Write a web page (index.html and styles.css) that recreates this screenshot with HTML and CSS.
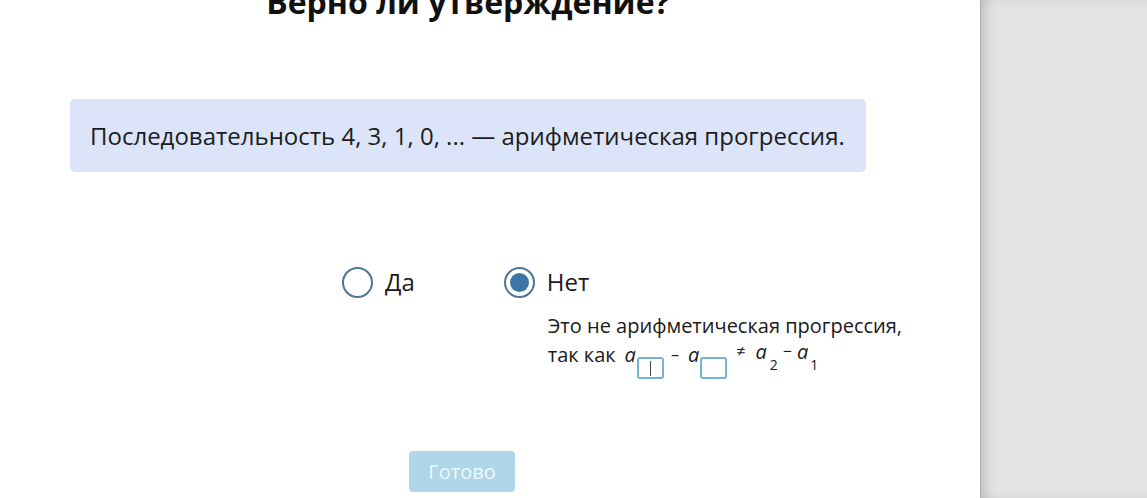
FILE: index.html
```html
<!DOCTYPE html>
<html lang="ru">
<head>
<meta charset="utf-8">
<link rel="stylesheet" href="styles.css">
</head>
<body>
<div class="page">
  <main class="main">
    <div class="content">
      <h1 class="title">Верно ли утверждение?</h1>
      <div class="statement">Последовательность 4, 3, 1, 0, ... — арифметическая прогрессия.</div>
      <div class="options">
        <label class="option option-yes">
          <span class="radio"></span>
          <span class="label">Да</span>
        </label>
        <div class="option-block">
          <label class="option option-no">
            <span class="radio checked"></span>
            <span class="label">Нет</span>
          </label>
          <div class="explain">
            <div class="line">Это не арифметическая прогрессия,</div>
            <div class="math-line"><span class="word">так как</span><span class="m m-first">a</span><span class="sub-box"><span class="caret"></span></span><span class="op dash">–</span><span class="m m-second">a</span><span class="sub-box sub-box-2"></span><span class="rest"><span class="op neq">≠</span><span class="m m-rest">a</span><span class="sub sub-2">2</span><span class="op minus">−</span><span class="m m-last">a</span><span class="sub sub-1">1</span></span></div>
          </div>
        </div>
      </div>
      <button class="done">Готово</button>
    </div>
  </main>
  <aside class="side"></aside>
</div>
</body>
</html>
```
FILE: styles.css
```css
html, body {
  margin: 0;
  padding: 0;
  height: 100%;
  overflow: hidden;
}
body {
  font-family: "Open Sans", "Liberation Sans", sans-serif;
  color: #1a1a1a;
  background: #fff;
}
.page {
  display: flex;
  height: 498px;
}
.main {
  width: 980px;
  background: #fff;
}
.side {
  flex: 1;
  background: #e2e3e2;
  box-shadow: inset 8px 0 14px -6px rgba(0,0,0,0.22);
  border-left: 1px solid #b0b1b0;
}
.content {
  margin-left: 70px;
  width: 796px;
}
.title {
  margin: -20px 0 0;
  font-size: 32px;
  line-height: 44px;
  font-weight: 700;
  text-align: center;
  color: #111;
}
.statement {
  margin-top: 75px;
  background: #dce4fa;
  border-radius: 5px;
  padding: 20px;
  font-size: 24px;
  line-height: 33px;
  color: #1c1c1c;
}
.options {
  display: flex;
  align-items: flex-start;
  margin-top: 94px;
  margin-left: 272px;
  gap: 89px;
}
.option {
  display: flex;
  align-items: center;
  gap: 12px;
  height: 32px;
}
.radio {
  width: 31px;
  height: 31px;
  box-sizing: border-box;
  border: 2px solid #4d7594;
  border-radius: 50%;
  background: #fff;
  position: relative;
}
.radio.checked::after {
  content: "";
  position: absolute;
  left: 4px;
  top: 4px;
  width: 19px;
  height: 19px;
  border-radius: 50%;
  background: #3e75a9;
}
.label {
  font-size: 24px;
  line-height: 32px;
  color: #1a1a1a;
}
.option-block {
  display: flex;
  flex-direction: column;
}
.explain {
  margin-top: 13px;
  margin-left: 44px;
  font-size: 20px;
  line-height: 29px;
  white-space: nowrap;
  color: #1a1a1a;
}
.math-line {
  display: flex;
  align-items: flex-start;
  height: 40px;
}
.m {
  font-style: italic;
  font-size: 20px;
}
.m-first {
  margin-left: 9px;
}
.m-second {
  margin-left: 9px;
}
.sub-box {
  display: inline-block;
  width: 27px;
  height: 22px;
  box-sizing: border-box;
  border: 2px solid #74b4d3;
  border-radius: 3px;
  margin-top: 17px;
  margin-left: 1px;
  position: relative;
}
.sub-box-2 {
  margin-left: 1px;
}
.caret {
  position: absolute;
  left: 11px;
  top: 2px;
  width: 1.5px;
  height: 15px;
  background: #444;
}
.op {
  font-size: 16px;
}
.dash {
  margin-left: 7px;
}
.rest {
  display: flex;
  align-items: flex-start;
  margin-top: -3px;
}
.neq {
  margin-left: 9px;
}
.m-rest {
  margin-left: 10px;
}
.minus {
  margin-left: 5px;
}
.m-last {
  margin-left: 5px;
}
.sub {
  font-size: 14px;
  line-height: 16px;
  margin-top: 20px;
}
.sub-2 {
  margin-left: 3px;
}
.sub-1 {
  margin-left: 2px;
}
.done {
  display: block;
  margin-top: 71px;
  margin-left: 339px;
  width: 106px;
  height: 41px;
  border: none;
  border-radius: 4px;
  background: #aed8e8;
  color: #eef7fb;
  font-family: "Open Sans", "Liberation Sans", sans-serif;
  font-size: 20px;
  padding: 0;
}
```
